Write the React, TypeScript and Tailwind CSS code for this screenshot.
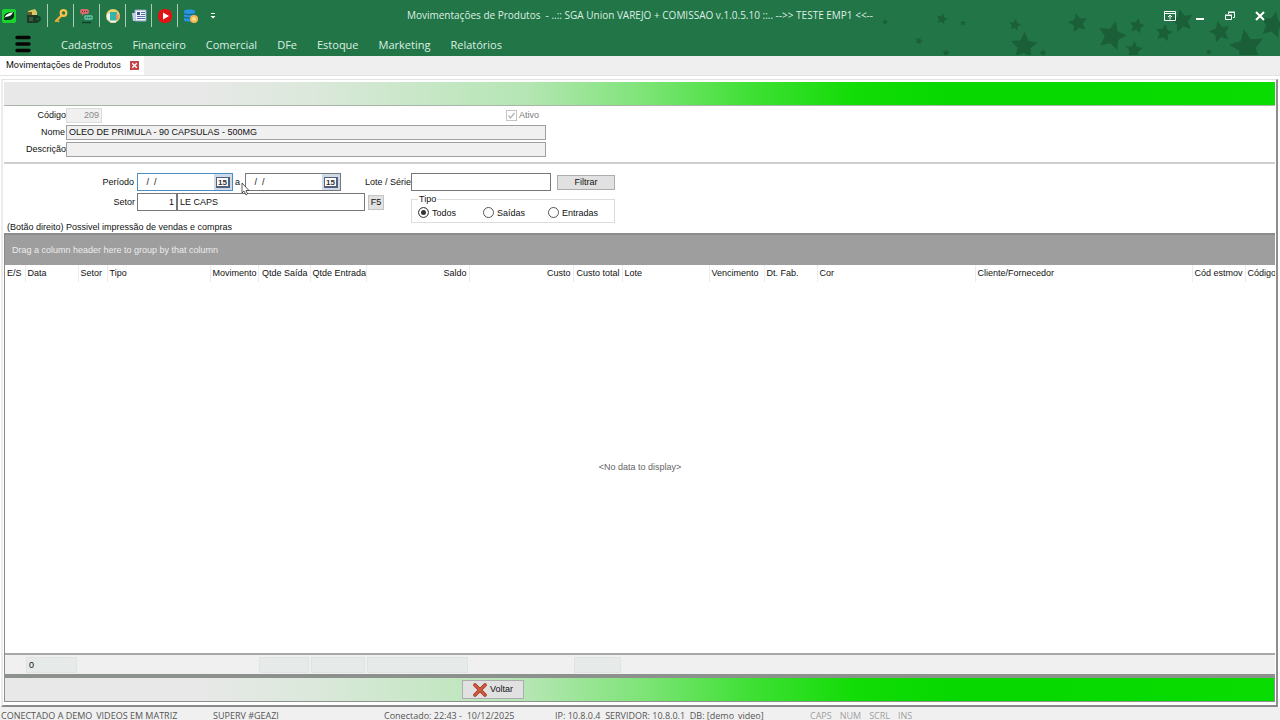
import React from 'react';
import clsx from 'clsx';

const MENU = ['Cadastros', 'Financeiro', 'Comercial', 'DFe', 'Estoque', 'Marketing', 'Relatórios'];

const COLUMNS = [
  { label: 'E/S', width: 'w-[20px]', align: 'text-left' },
  { label: 'Data', width: 'w-[53px]', align: 'text-left' },
  { label: 'Setor', width: 'w-[29px]', align: 'text-left' },
  { label: 'Tipo', width: 'w-[103px]', align: 'text-left' },
  { label: 'Movimento', width: 'w-[48px]', align: 'text-left' },
  { label: 'Qtde Saída', width: 'w-[52px]', align: 'text-right', total: true },
  { label: 'Qtde Entrada', width: 'w-[56px]', align: 'text-right', total: true },
  { label: 'Saldo', width: 'w-[103px]', align: 'text-right', total: true },
  { label: 'Custo', width: 'w-[104px]', align: 'text-right' },
  { label: 'Custo total', width: 'w-[49px]', align: 'text-right', total: true },
  { label: 'Lote', width: 'w-[87px]', align: 'text-left' },
  { label: 'Vencimento', width: 'w-[55px]', align: 'text-left' },
  { label: 'Dt. Fab.', width: 'w-[53px]', align: 'text-left' },
  { label: 'Cor', width: 'w-[158px]', align: 'text-left' },
  { label: 'Cliente/Fornecedor', width: 'w-auto', align: 'text-left' },
  { label: 'Cód estmov', width: 'w-[53px]', align: 'text-left' },
  { label: 'Código', width: 'w-[30px]', align: 'text-left' },
];

// [cx, cy, radius, rotation]
const STARS = [
  [5, 22, 3, 10], [62, 19, 6, 15], [83, 23, 3, 0], [39, 41, 4, 20], [66, 53, 4, 0],
  [135, 25, 6, 10], [144, 46, 14, 3], [163, 53, 4, 0], [198, 23, 10, -12], [232, 36, 15, 15],
  [257, 26, 8, 12], [254, 50, 9, 5], [284, 33, 9, 10], [302, 21, 12, -12], [340, 32, 11, -14],
  [367, 47, 18, -10], [393, 25, 14, 14], [329, 52, 3, 0],
];

const starPoints = (cx: number, cy: number, r: number, rot: number) => {
  const pts: string[] = [];
  for (let i = 0; i < 10; i++) {
    const a = ((i * 36 - 90 + rot) * Math.PI) / 180;
    const d = i % 2 ? r * 0.48 : r;
    pts.push(`${(cx + d * Math.cos(a)).toFixed(1)},${(cy + d * Math.sin(a)).toFixed(1)}`);
  }
  return pts.join(' ');
};

const Stars = () => (
  <svg className="absolute top-0 right-0" width="400" height="55" viewBox="0 0 400 55" aria-hidden="true">
    {STARS.map(([x, y, r, rot], i) => (
      <polygon key={i} points={starPoints(x, y, r, rot)} fill="#1a5f38" />
    ))}
  </svg>
);

const toolIcons = [
  {
    name: 'Sistema',
    art: (
      <>
        <rect x="1" y="1" width="14" height="14" rx="2" fill="#19d42d" />
        <path d="M3 12V8c1-3 4-4 10-4v5c-1 2-3 3-5 3z" fill="#0b2a17" />
        <path d="M3 10c2-4 5-5 9-6-1 3-3 4-5 4.500S4 9 3 10z" fill="#e9fff0" />
      </>
    ),
  },
  {
    name: 'Caixa',
    art: (
      <>
        <path d="M1 7h11v8H1z" fill="#1d3a26" />
        <path d="M2 3l7-2 2 3v3H2z" fill="#d9c765" />
        <path d="M2 4h4v3H2z" fill="#6d5a24" />
        <path d="M9 9h5v4H9z" fill="#16573c" stroke="#0e2f1e" />
        <path d="M3 10h4M3 12h4" stroke="#54815f" />
      </>
    ),
  },
  {
    name: 'Acesso',
    art: (
      <>
        <path d="M9 7L3 13" stroke="#f0ae35" strokeWidth="2.4" strokeLinecap="round" />
        <path d="M4 12l2 2" stroke="#f0ae35" strokeWidth="1.6" />
        <circle cx="10.500" cy="5" r="2.800" fill="none" stroke="#f7c14c" strokeWidth="2.2" />
      </>
    ),
  },
  {
    name: 'Mensagens',
    art: (
      <>
        <rect x="1" y="1" width="9" height="5" rx="2" fill="#d66a6c" />
        <path d="M3 5v3l3-3z" fill="#d66a6c" />
        <rect x="5" y="7" width="9" height="5" rx="2" fill="#58b596" />
        <path d="M3 3.500h5" stroke="#7c2d30" strokeDasharray="1 1" />
        <path d="M7 9.500h5" stroke="#1c5f48" strokeDasharray="1 1" />
        <path d="M3 14.500h9" stroke="#12402a" strokeWidth="1.500" />
      </>
    ),
  },
  {
    name: 'Atendimento',
    art: (
      <>
        <circle cx="8" cy="8" r="7" fill="#f1cf6e" />
        <path d="M5 4h7v7l-2 3H5z" fill="#35b5a5" />
        <path d="M2 6l3-1v8l-3-2z" fill="#e9f2f4" />
        <path d="M11 6l3 1-1 5-2-2z" fill="#f28a6c" />
        <path d="M5 13.500h6" stroke="#f5f1ea" strokeWidth="2" />
      </>
    ),
  },
  {
    name: 'Notícias',
    art: (
      <>
        <path d="M4 2h11v11H4z" fill="#f1f5fb" stroke="#8fa0c4" />
        <path d="M1 5h3v8H2z" fill="#c3cee6" />
        <path d="M6 4h3v3H6z" fill="#3c56a0" />
        <path d="M10 4.500h4M10 6.500h4M6 8.500h8M6 10.500h8" stroke="#5c70ab" />
      </>
    ),
  },
  {
    name: 'Vídeos',
    art: (
      <>
        <rect x="1" y="1" width="14" height="14" rx="6" fill="#e01414" />
        <path d="M6 4.500v7l6-3.500z" fill="#fff" />
      </>
    ),
  },
  {
    name: 'Banco de dados',
    art: (
      <>
        <path d="M1 3c0-2 11-2 11 0v9c0 2-11 2-11 0z" fill="#2795e6" />
        <path d="M1 5.500c2 1.500 9 1.500 11 0M1 9c2 1.500 9 1.500 11 0" stroke="#1c6a6e" strokeWidth="1.200" fill="none" />
        <circle cx="11" cy="11" r="4" fill="#f4b84e" />
        <circle cx="11" cy="11" r="2" fill="#ffdb8d" />
      </>
    ),
  },
];

const TitleBar = () => (
  <div className="relative grid h-[31px] grid-cols-[1fr_auto_1fr] items-center">
    <div className="flex items-center">
      {toolIcons.map((t, i) => (
        <div
          key={t.name}
          className={clsx('flex h-[23px] items-center', i === 0 ? 'w-[21px]' : 'w-[26px]', i > 1 && 'border-l border-[#a9cdb6]')}
        >
          <button title={t.name} className={clsx('block', i === 0 ? 'pl-px' : 'pl-[5px]')}>
            <svg width="16" height="16" viewBox="0 0 16 16">{t.art}</svg>
          </button>
        </div>
      ))}
      <button title="Personalizar" className="ml-[6px]">
        <svg width="8" height="8" viewBox="0 0 8 8">
          <path d="M2 1.500h4" stroke="#fff" />
          <path d="M1.500 4h5L4 6.500z" fill="#fff" />
        </svg>
      </button>
    </div>
    <h1 className="text-[10px] whitespace-pre text-[#deefe4]">
      {'Movimentações de Produtos  - ..:: SGA Union VAREJO + COMISSAO v.1.0.5.10 ::.. -->> TESTE EMP1 <<--'}
    </h1>
    <div className="flex items-center justify-end gap-[18px] pr-[14px] text-white">
      <button title="Faixa de opções">
        <svg width="12" height="12" viewBox="0 0 12 12" fill="none" stroke="currentColor">
          <path d="M.5 1.500h11v9H.5zM.5 3.500h11" />
          <path d="M6 9.500V5.500M4 7l2-2 2 2" />
        </svg>
      </button>
      <button title="Minimizar">
        <svg width="12" height="12" viewBox="0 0 12 12"><path d="M2 9h8" stroke="currentColor" strokeWidth="2" /></svg>
      </button>
      <button title="Restaurar">
        <svg width="12" height="12" viewBox="0 0 12 12" fill="none" stroke="currentColor">
          <path d="M4.500 4V2.500h6v5H9M4 2h7" />
          <path d="M1.500 5.500h6v4h-6zM1 5h7" />
        </svg>
      </button>
      <button title="Fechar">
        <svg width="12" height="12" viewBox="0 0 12 12"><path d="M2 2l8 8M10 2l-8 8" stroke="currentColor" strokeWidth="2" /></svg>
      </button>
    </div>
  </div>
);

const MenuBar = () => (
  <nav className="relative flex h-[25px] items-center pl-[15px]">
    <button title="Menu" className="mr-[30px]">
      <svg width="16" height="18" viewBox="0 0 16 18" stroke="#050505" strokeWidth="3.400" strokeLinecap="round">
        <path d="M2 2.500h12M2 9h12M2 15.500h12" />
      </svg>
    </button>
    <div className="flex gap-[20px] pt-[3px]">
      {MENU.map((m) => (
        <a key={m} href="#" className="text-[11px] text-[#deefe4]">{m}</a>
      ))}
    </div>
  </nav>
);

const GreenBar = ({ children }: { children?: React.ReactNode }) => (
  <div className="flex h-[23px] shrink-0 items-center bg-[linear-gradient(90deg,#e8e8e8_15%,#dce8dc_24%,#b5e6b4_41%,#80e479_50%,#3de033_59%,#12dc06_67%,#06d800_75%,#08dc00_100%)]">
    {children}
  </div>
);

const CalendarButton = () => (
  <button title="Calendário" className="flex w-[18px] items-center justify-center bg-[#cfdbe9]">
    <span className="h-[11px] border border-r-2 border-b-2 border-[#56607c] bg-white px-px text-[8px] leading-[9px] font-bold text-[#333]">15</span>
  </button>
);

const DateField = ({ id, label, focused }: { id: string; label: string; focused?: boolean }) => (
  <div className={clsx('flex h-[18px] w-[96px] border bg-white', focused ? 'border-[#4a90c8]' : 'border-[#777]')}>
    <input id={id} aria-label={label} defaultValue={' /  /'} className="min-w-0 flex-1 pl-[6px] outline-none" />
    <CalendarButton />
  </div>
);

const ProductForm = () => (
  <section className="flex h-[58px] flex-col gap-[2px] border-b-2 border-[#cfcfcf] pt-[2px]">
    <div className="flex h-[15px] items-center">
      <label htmlFor="codigo" className="w-[62px] text-right">Código</label>
      <input id="codigo" disabled defaultValue="209" className="h-[15px] w-[36px] border border-[#dcdcdc] bg-[#f0f0f0] pr-[2px] text-right text-[#8a8a8a]" />
      <label className="ml-[404px] flex items-center gap-[2px] text-[#7c7c7c]">
        <span className="grid">
          <input type="checkbox" defaultChecked disabled className="col-start-1 row-start-1 size-[11px] appearance-none border border-[#c4c4c4] bg-white" />
          <svg className="col-start-1 row-start-1" width="11" height="11" viewBox="0 0 11 11"><path d="M2.500 5.500l2 2.500 4-5" fill="none" stroke="#b5b5b5" strokeWidth="1.300" /></svg>
        </span>
        Ativo
      </label>
    </div>
    <div className="flex h-[15px] items-center">
      <label htmlFor="nome" className="w-[62px] pr-px text-right">Nome</label>
      <input id="nome" readOnly defaultValue="OLEO DE PRIMULA - 90 CAPSULAS - 500MG" className="h-[15px] w-[480px] border border-[#a0a0a0] bg-[#f0f0f0] pl-[2px]" />
    </div>
    <div className="flex h-[15px] items-center">
      <label htmlFor="descricao" className="w-[62px] text-right">Descrição</label>
      <input id="descricao" readOnly className="h-[15px] w-[480px] border border-[#a0a0a0] bg-[#f0f0f0] pl-[2px]" />
    </div>
  </section>
);

const Filters = () => (
  <section className="flex h-[69px] flex-col pt-[9px]">
    <div className="flex h-[48px]">
      <div className="flex w-[407px] flex-col gap-[2px]">
        <div className="flex items-center">
          <label htmlFor="periodo-de" className="w-[133px] pr-[3px] text-right">Período</label>
          <DateField id="periodo-de" label="Período inicial" focused />
          <label htmlFor="periodo-ate" className="w-[12px] pl-[2px] text-left">a</label>
          <DateField id="periodo-ate" label="Período final" />
          <label htmlFor="lote" className="flex-1 text-right whitespace-nowrap">Lote / Série</label>
        </div>
        <div className="flex items-center">
          <label htmlFor="setor" className="w-[133px] pr-[2px] text-right">Setor</label>
          <input id="setor" defaultValue="1" className="h-[18px] w-[40px] border border-[#777] bg-white pr-[2px] text-right" />
          <input aria-label="Nome do setor" defaultValue="LE CAPS" className="h-[18px] w-[188px] border border-[#777] bg-white pl-[2px]" />
          <button className="ml-[3px] h-[15px] w-[16px] border border-[#c4c4c4] bg-[#e1e1e1] leading-[12px]">F5</button>
        </div>
      </div>
      <div>
        <div className="flex items-center gap-[6px]">
          <input id="lote" className="h-[18px] w-[140px] border border-[#777] bg-white pl-[2px]" />
          <button className="h-[15px] w-[58px] border border-[#adadad] bg-[#e1e1e1] leading-[12px]">Filtrar</button>
        </div>
        <fieldset className="mt-[2px] flex w-[204px] border border-[#dcdcdc] pt-[2px] pl-[6px]">
          <legend className="px-px leading-[12px]">Tipo</legend>
          {['Todos', 'Saídas', 'Entradas'].map((t, i) => (
            <label key={t} className="flex h-[15px] w-[65px] items-start gap-[3px] leading-[12px]">
              <input
                type="radio"
                name="tipo"
                defaultChecked={i === 0}
                className="size-[11px] appearance-none rounded-full border border-[#555] bg-white shadow-[inset_0_0_0_2px_white] checked:bg-[#333]"
              />
              {t}
            </label>
          ))}
        </fieldset>
      </div>
    </div>
    <p className="pl-[3px] leading-[12px]">(Botão direito) Possivel impressão de vendas e compras</p>
  </section>
);

const Grid = () => (
  <section className="flex min-h-0 flex-1 flex-col border-l border-[#8a8a8a]">
    <div className="flex h-[32px] shrink-0 items-center border-t-2 border-[#8c8c8c] bg-[#9e9e9e] pl-[7px] text-[#ececec]">
      Drag a column header here to group by that column
    </div>
    <div className="min-h-0 flex-1">
      <table className="h-full w-full table-fixed border-collapse">
        <thead>
          <tr className="h-[17px]">
            {COLUMNS.map((c) => (
              <th key={c.label} className={clsx('overflow-hidden border-r border-[#ececec] px-[2px] font-normal whitespace-nowrap last:border-r-0', c.width, c.align)}>
                {c.label}
              </th>
            ))}
          </tr>
        </thead>
        <tbody>
          <tr>
            <td colSpan={COLUMNS.length} className="text-center text-[#666]">&lt;No data to display&gt;</td>
          </tr>
        </tbody>
        <tfoot>
          <tr className="h-[20px] border-t-2 border-[#a8a8a8] bg-[#f0f0f0]">
            {COLUMNS.map((c, i) => (
              <td key={c.label} className="p-px">
                <div className={clsx('h-[16px] pl-[2px] leading-[14px]', (c.total || i === 1) && 'border border-[#dfe3e2] bg-[#e6eae9]')}>
                  {i === 1 ? '0' : ''}
                </div>
              </td>
            ))}
          </tr>
        </tfoot>
      </table>
    </div>
  </section>
);

const StatusBar = () => (
  <footer className="flex h-[13px] shrink-0 overflow-hidden bg-[#f0f0f0] pl-px text-[9px] leading-[18px] whitespace-pre text-[#555]">
    <span className="w-[212px] shrink-0">CONECTADO A DEMO_VIDEOS EM MATRIZ</span>
    <span className="w-[171px] shrink-0">SUPERV #GEAZI</span>
    <span className="w-[171px] shrink-0">{'Conectado: 22:43 -  10/12/2025'}</span>
    <span className="w-[255px] shrink-0">{'IP: 10.8.0.4  SERVIDOR: 10.8.0.1  DB: [demo_video]'}</span>
    <span className="flex gap-[8px] text-[#a0a0a0]">
      <span>CAPS</span>
      <span>NUM</span>
      <span>SCRL</span>
      <span>INS</span>
    </span>
  </footer>
);

export default function App() {
  return (
    <div className="flex h-screen flex-col overflow-hidden bg-white font-['Open_Sans','Noto_Sans',sans-serif]">
      <header className="relative shrink-0 bg-[#217546]">
        <Stars />
        <TitleBar />
        <MenuBar />
      </header>

      <div className="flex h-[20px] shrink-0 border-b border-[#e2e2e2] bg-[#efefef]">
        <div className="flex items-center gap-[9px] bg-white pr-[5px] pl-[6px] font-['Roboto','Noto_Sans',sans-serif] text-[9px] text-[#111]">
          Movimentações de Produtos
          <button title="Fechar aba" className="flex size-[9px] items-center justify-center bg-[#c4474c]">
            <svg width="5" height="5" viewBox="0 0 5 5"><path d="M0 0l5 5M5 0L0 5" stroke="#fff" strokeWidth="1.300" /></svg>
          </button>
        </div>
      </div>

      <main className="mt-[3px] mr-[2px] ml-px flex min-h-0 flex-1 flex-col border-t border-r-2 border-b-2 border-l-2 border-t-[#e2e2e2] border-r-[#8e8e8e] border-b-[#8a8a8a] border-l-[#ececec] pt-[2px] pr-px pl-px font-['Liberation_Sans',Arial,sans-serif] text-[9px] leading-[15px] text-[#111]">
        <div className="border-b border-[#a9b5a9]">
          <GreenBar />
        </div>
        <ProductForm />
        <Filters />
        <Grid />
        <div className="mb-[3px] border border-t-4 border-[#8c918e]">
          <GreenBar>
            <button className="ml-[457px] flex h-[19px] w-[62px] items-center justify-center gap-[3px] border border-[#adadad] bg-[#e1e1e1]">
              <svg width="14" height="14" viewBox="0 0 14 14">
                <path d="M2 2l10 10M12 2L2 12" stroke="#9c3a24" strokeWidth="3.600" strokeLinecap="round" />
                <path d="M2 2l10 10M12 2L2 12" stroke="#cf5a3c" strokeWidth="2.200" strokeLinecap="round" />
              </svg>
              Voltar
            </button>
          </GreenBar>
        </div>
      </main>

      <StatusBar />

      {/* mouse pointer */}
      <svg className="pointer-events-none absolute top-[182px] left-[241px]" width="9" height="14" viewBox="0 0 9 14">
        <path d="M1 1v10l2-2 2 4 1.500-1-1.500-3.500h3z" fill="#fff" stroke="#333" strokeWidth=".8" />
      </svg>
    </div>
  );
}
